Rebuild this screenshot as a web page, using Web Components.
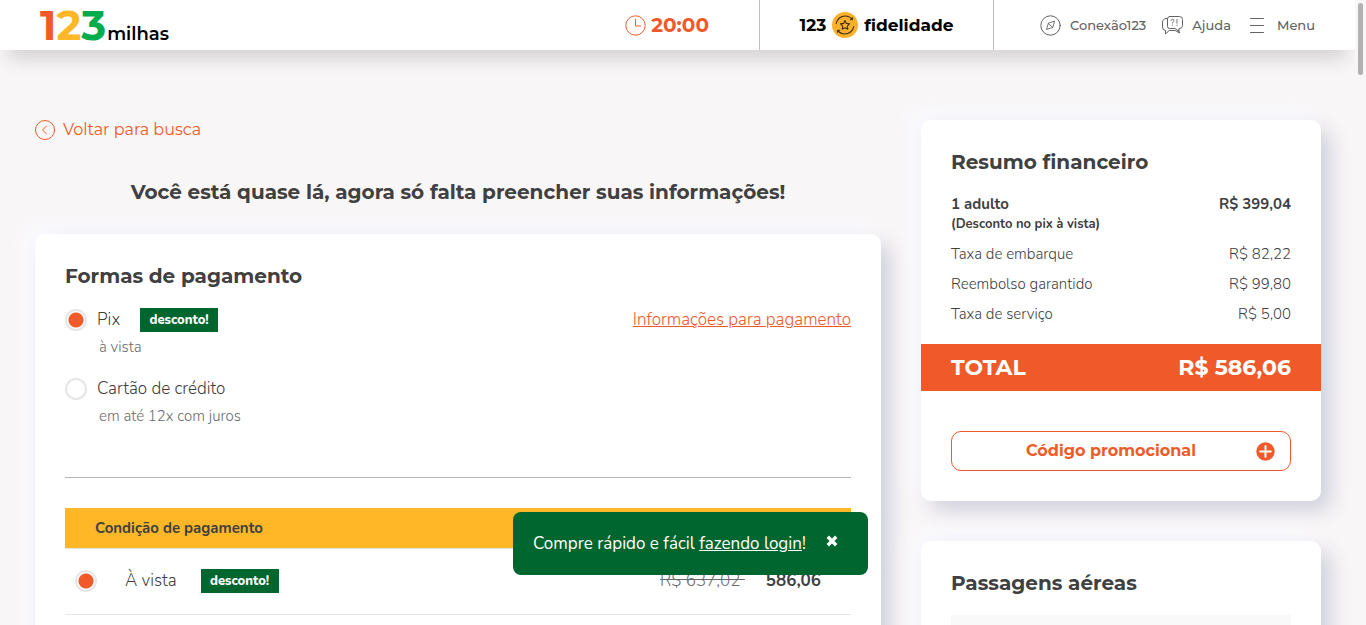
<!DOCTYPE html>
<html lang="pt-BR">
<head>
<meta charset="utf-8">
<meta name="viewport" content="width=device-width, initial-scale=1">
<title>123milhas - Pagamento</title>
<style>
  :root {
    --orange: #f05a2a;
    --yellow: #ffb728;
    --green: #00662f;
    --ink: #404041;
    --muted: #6b6b6d;
    --line: #e6e6e6;
    --page: #f9f6f7;
    --light: 350;
    --heading: Montserrat, Inter, sans-serif;
    --text: Nunito, "Noto Sans", sans-serif;
  }
  html { height: 100%; overflow: hidden; }
  body { margin: 0; height: 100%; background: var(--page); color: var(--ink); font: 17px/24px var(--text); }
</style>
</head>
<body>
<checkout-page></checkout-page>

<script>
const define = (name, html, setup) => {
  const template = document.createElement('template');
  template.innerHTML = html;
  customElements.define(name, class extends HTMLElement {
    constructor() {
      super();
      this.attachShadow({ mode: 'open' }).append(template.content.cloneNode(true));
      if (setup) setup(this, this.shadowRoot);
    }
  });
};

define('brand-logo', `
  <style>
    :host { display: block; }
    a { display: flex; align-items: baseline; gap: 1px; color: #000; text-decoration: none; }
    .n { font: 700 42px/48px var(--heading); }
    .n1 { color: var(--orange); } .n2 { color: var(--yellow); } .n3 { color: #00ac4b; }
    .w { font: 600 18px/24px var(--heading); }
  </style>
  <a href="#"><span class="n"><span class="n1">1</span><span class="n2">2</span><span class="n3">3</span></span><span class="w">milhas</span></a>`);

define('session-timer', `
  <style>
    :host { display: flex; align-items: center; gap: 5px; color: var(--orange); font: 700 20px/24px var(--heading); }
    svg { width: 21px; height: 21px; }
  </style>
  <svg viewBox="0 0 21 21" fill="none" stroke="currentColor"><circle cx="10.500" cy="10.500" r="9.700"/><path d="M10.500 4v7h5.500"/></svg>
  <time>20:00</time>`);

define('loyalty-link', `
  <style>
    :host { display: flex; }
    a { display: flex; align-items: center; gap: 6px; color: #000; text-decoration: none; font: 700 17px/24px var(--heading); }
    svg { width: 26px; height: 26px; }
  </style>
  <a href="#"><span>123</span>
    <svg viewBox="0 0 26 26" fill="none" stroke="#3b2c10" stroke-width="1.100" stroke-linejoin="round" stroke-linecap="round">
      <circle cx="13" cy="13" r="13" fill="#fbb02d" stroke="none"/>
      <path d="M13 8.600l1.400 2.800 3.100.5-2.200 2.200.5 3.100-2.800-1.400-2.800 1.400.5-3.100-2.200-2.200 3.100-.5z"/>
      <path d="M4.200 11.500C5 6.800 9 4 13.200 4c3 0 5.300 1.200 7 3.300M21.800 14.500C21 19.200 17 22 12.800 22c-3 0-5.300-1.200-7-3.300"/>
      <path d="M20.600 5.600v2.200h-2.200zM5.400 20.400v-2.200h2.200z" fill="#3b2c10" stroke-width=".6"/>
    </svg>
    <span>fidelidade</span></a>`);

define('nav-item', `
  <style>
    :host { display: block; }
    a, button { display: flex; align-items: center; gap: 9px; padding: 0; border: 0; background: none; color: #626365; text-decoration: none; font: 500 13px/20px var(--heading); cursor: pointer; }
    ::slotted(svg) { width: 21px; height: 21px; fill: none; stroke: #626365; stroke-linejoin: round; stroke-linecap: round; }
  </style>
  <a href="#"><slot name="icon"></slot><slot></slot></a>`,
  (host, root) => {
    if (host.getAttribute('kind') !== 'button') return;
    const link = root.querySelector('a');
    const button = document.createElement('button');
    button.type = 'button';
    button.append(...link.childNodes);
    link.replaceWith(button);
  });

define('site-header', `
  <style>
    :host { position: relative; z-index: 1; display: block; background: #fff; box-shadow: 0 16px 20px -8px rgba(0, 0, 0, .16); }
    header { display: flex; align-items: stretch; height: 50px; padding: 0 40px; }
    header > * { display: flex; align-items: center; }
    brand-logo { margin-right: auto; }
    session-timer { padding-right: 50px; }
    loyalty-link { box-sizing: border-box; width: 235px; justify-content: center; border: solid #bcbdbf; border-width: 0 1px; }
    nav { gap: 16px; padding-left: 46px; }
  </style>
  <header>
    <brand-logo></brand-logo>
    <session-timer></session-timer>
    <loyalty-link></loyalty-link>
    <nav>
      <nav-item><svg slot="icon" viewBox="0 0 21 21"><circle cx="10.500" cy="10.500" r="9.700"/><path d="M14.500 6.500l-1.700 6-6.300 2 1.800-6zM8.300 8.500l4.500 4" stroke-width=".9"/></svg>Conexão123</nav-item>
      <nav-item><svg slot="icon" viewBox="0 0 21 21"><path d="M7.500 1.500h10a3 3 0 0 1 3 3v6a3 3 0 0 1-3 3h-.5v3l-4-3H7.500a2 2 0 0 1-2-2v-7.500a2.500 2.500 0 0 1 2-2.500z"/><path d="M5.500 3.500a4 4 0 0 0-5 3.500v5a3.500 3.500 0 0 0 3 3.500v3.500l3.700-3.500h6l4.300 2.500-1-3"/><path d="M9 5.500c.2-1.800 3-1.600 2.900.1 0 1.300-1.500 1.100-1.500 2.500M10.400 10v.3M15 4.500v3.700M15 10v.3" stroke-width=".9"/></svg>Ajuda</nav-item>
      <nav-item kind="button"><svg slot="icon" viewBox="0 0 21 21"><path d="M3.500 3.500h13M3.500 10.500h13M3.500 17.500h13"/></svg>Menu</nav-item>
    </nav>
  </header>`);

define('back-link', `
  <style>
    :host { display: flex; }
    a { display: flex; align-items: center; gap: 8px; color: var(--orange); text-decoration: none; font: 450 16px/20px var(--heading); }
    svg { width: 20px; height: 20px; }
  </style>
  <a href="#"><svg viewBox="0 0 20 20" fill="none" stroke="currentColor"><circle cx="10" cy="10" r="9.500"/><path d="M11.500 6L7.500 10l4 4"/></svg><slot></slot></a>`);

define('ui-card', `
  <style>
    :host { display: block; padding: 30px; background: #fff; border-radius: 10px; box-shadow: 10px 10px 20px #d0d1dd, -10px -10px 20px #f9faff; }
    h2 { margin: 0 0 20px; font: 700 20px/24px var(--heading); }
  </style>
  <h2></h2><slot></slot>`,
  (host, root) => { root.querySelector('h2').textContent = host.getAttribute('heading'); });

define('discount-badge', `
  <style>
    :host { display: block; box-sizing: border-box; width: 78px; background: var(--green); color: #fff; text-align: center; font: 800 13px/24px var(--text); }
  </style><slot></slot>`);

const radioStyle = `
    input { appearance: none; box-sizing: border-box; width: 22px; height: 22px; margin: 0; border: 2px solid var(--line); border-radius: 50%; background: #fff; }
    input:checked { background: radial-gradient(circle, var(--orange) 7px, #fff 8px); }`;

define('payment-methods', `
  <style>
    :host { display: block; }
    ${radioStyle}
    fieldset { display: grid; gap: 20px; margin: 0; padding: 0 0 51px; border: 0; border-bottom: 1px solid #b5b5b5; }
    .row { display: flex; align-items: center; height: 24px; }
    label { padding-left: 10px; font-weight: var(--light); }
    discount-badge { margin-left: 20px; }
    a { margin-left: auto; color: var(--orange); font-weight: var(--light); }
    p { margin: 5px 0 0 34px; font: var(--light) 15px/20px var(--text); color: var(--muted); }
  </style>
  <fieldset aria-label="Formas de pagamento">
    <div>
      <div class="row"><input type="radio" name="method" id="pix" checked><label for="pix">Pix</label><discount-badge>desconto!</discount-badge><a href="#">Informações para pagamento</a></div>
      <p>à vista</p>
    </div>
    <div>
      <div class="row"><input type="radio" name="method" id="card"><label for="card">Cartão de crédito</label></div>
      <p>em até 12x com juros</p>
    </div>
  </fieldset>`);

define('payment-conditions', `
  <style>
    :host { display: block; margin-top: 30px; padding-bottom: 30px; }
    ${radioStyle}
    table { width: 100%; border-collapse: collapse; }
    th { padding: 8px 30px; background: var(--yellow); text-align: left; font: 700 15px/24px var(--text); }
    tr { border-bottom: 1px solid var(--line); }
    td { padding: 20px 30px 21px 10px; }
    .row { display: flex; align-items: center; height: 24px; }
    label { padding-left: 28px; font-weight: var(--light); }
    discount-badge { margin: 0 auto 0 24px; }
    s { color: var(--muted); font-weight: 300; white-space: pre; }
    strong { margin-left: 21px; font-weight: 700; }
  </style>
  <table>
    <thead><tr><th scope="col">Condição de pagamento</th></tr></thead>
    <tbody><tr><td><div class="row"><input type="radio" name="condition" id="cash" checked><label for="cash">À vista</label><discount-badge>desconto!</discount-badge><s>R$ 637,02 </s><strong>586,06</strong></div></td></tr></tbody>
  </table>`);

define('price-summary', `
  <style>
    :host { display: block; }
    dl { display: grid; gap: 10px; margin: 0; }
    dl div { display: flex; justify-content: space-between; font: var(--light) 15px/20px var(--text); }
    dl .strong { font-weight: 700; }
    dd { margin: 0; }
    small { display: block; font-size: 13px; }
    .total { display: flex; justify-content: space-between; margin: 20px -30px 40px; padding: 10px 30px; background: var(--orange); color: #fff; font: 700 22px/27px var(--heading); }
    button { display: grid; grid-template-columns: 1fr auto; align-items: center; width: 100%; height: 40px; padding: 0 15px 0 14px; border: 1px solid var(--orange); border-radius: 10px; background: #fff; color: var(--orange); font: 700 16px/24px var(--heading); }
    svg { width: 19px; height: 19px; }
  </style>
  <dl>
    <div class="strong"><dt>1 adulto<small>(Desconto no pix à vista)</small></dt><dd>R$ 399,04</dd></div>
    <div><dt>Taxa de embarque</dt><dd>R$ 82,22</dd></div>
    <div><dt>Reembolso garantido</dt><dd>R$ 99,80</dd></div>
    <div><dt>Taxa de serviço</dt><dd>R$ 5,00</dd></div>
  </dl>
  <div class="total"><span>TOTAL</span><span>R$ 586,06</span></div>
  <button type="button"><span>Código promocional</span><svg viewBox="0 0 19 19"><circle cx="9.500" cy="9.500" r="9.200" fill="#f05a2a"/><path d="M9.500 4.200v10.600M4.200 9.500h10.600" stroke="#fff" stroke-width="2" stroke-linecap="round"/></svg></button>`);

define('flight-list', `
  <style>:host { display: block; height: 120px; background: #f9f9f9; }</style>`);

define('login-toast', `
  <style>
    :host { position: fixed; right: 498px; bottom: 50px; z-index: 2; display: flex; justify-content: space-between; box-sizing: border-box; width: 355px; padding: 20px 30px 19px 20px; border-radius: 8px; background: var(--green); color: #fff; white-space: nowrap; }
    a { color: inherit; }
    button { display: flex; align-items: center; height: 18px; padding: 0; border: 0; background: none; }
    svg { width: 12px; height: 12px; }
  </style>
  <span>Compre rápido e fácil <a href="#">fazendo login</a>!</span>
  <button type="button" aria-label="Fechar"><svg viewBox="0 0 12 12"><path d="M1.800 1.800l8.400 8.400M10.200 1.800L1.800 10.200" stroke="#fff" stroke-width="3.400"/></svg></button>`);

define('scroll-track', `
  <style>
    :host { position: fixed; inset: 0 0 0 auto; z-index: 3; box-sizing: border-box; width: 11px; padding: 3px; background: var(--page); }
    div { width: 5px; height: 72px; border-radius: 3px; background: #b1b1b1; }
  </style><div></div>`);

define('checkout-page', `
  <style>
    :host { display: block; height: 100%; padding-right: 11px; box-sizing: border-box; overflow: hidden auto; scrollbar-width: none; }
    main { display: grid; grid-template-columns: minmax(0, 1fr) 400px; gap: 40px; align-items: start; padding: 70px 34px 40px 35px; }
    h1 { margin: 40px 0 30px; text-align: center; font: 700 20px/24px var(--heading); }
    aside { display: grid; gap: 40px; }
  </style>
  <site-header></site-header>
  <main>
    <section>
      <back-link>Voltar para busca</back-link>
      <h1>Você está quase lá, agora só falta preencher suas informações!</h1>
      <ui-card heading="Formas de pagamento">
        <payment-methods></payment-methods>
        <payment-conditions></payment-conditions>
      </ui-card>
    </section>
    <aside>
      <ui-card heading="Resumo financeiro"><price-summary></price-summary></ui-card>
      <ui-card heading="Passagens aéreas"><flight-list></flight-list></ui-card>
    </aside>
  </main>
  <login-toast></login-toast>
  <scroll-track></scroll-track>`);
</script>
</body>
</html>
